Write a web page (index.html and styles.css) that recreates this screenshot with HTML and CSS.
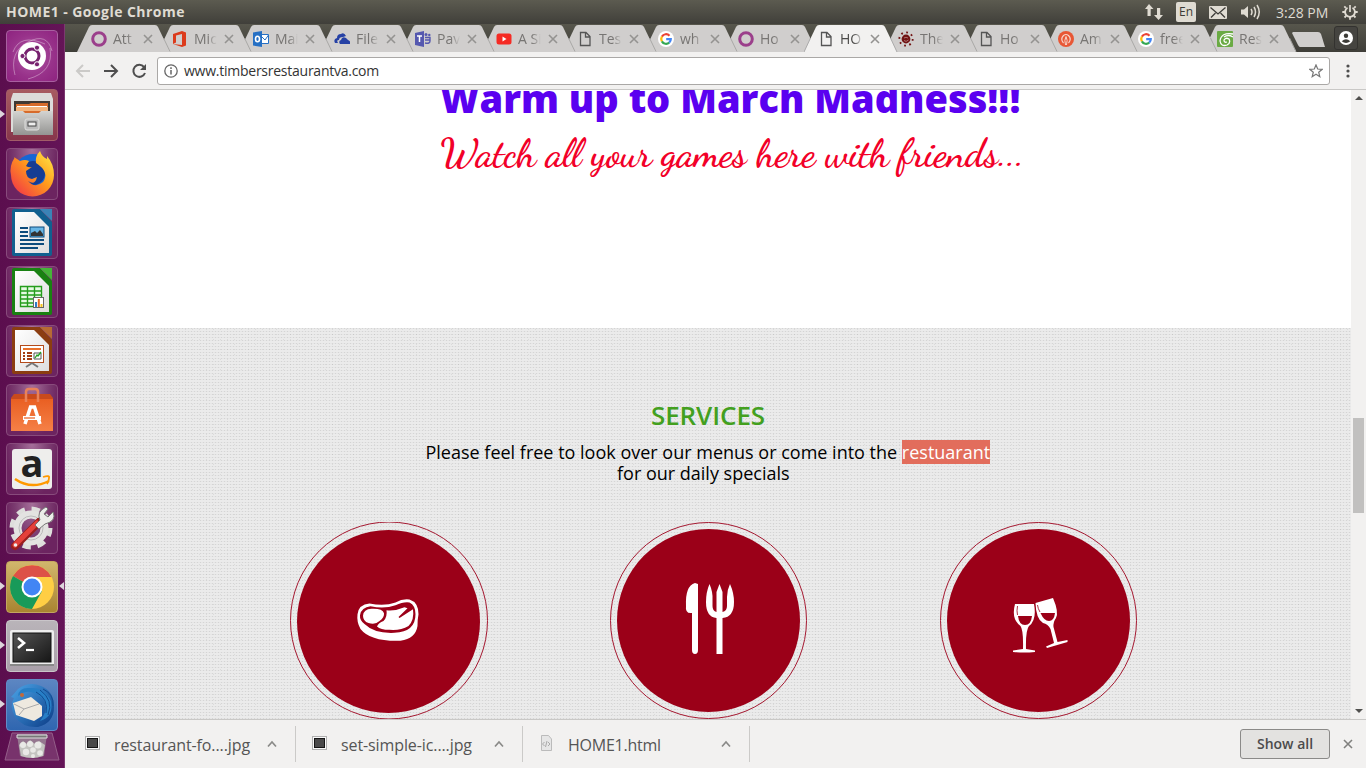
FILE: index.html
```html
<!DOCTYPE html>
<html lang="en">
<head>
<meta charset="utf-8">
<title>HOME1</title>
<link rel="stylesheet" href="styles.css">
</head>
<body>
<svg class="defs" width="0" height="0">
  <defs>
    <linearGradient id="fox" x1="1" y1="0" x2="0" y2="1"><stop offset="0" stop-color="#fff04a"/><stop offset=".45" stop-color="#ff9a1c"/><stop offset="1" stop-color="#f0264d"/></linearGradient>
    <linearGradient id="metal" x1="0" y1="0" x2="0" y2="1"><stop offset="0" stop-color="#d4d4d2"/><stop offset="1" stop-color="#949492"/></linearGradient>
    <linearGradient id="paper" x1="0" y1="0" x2="1" y2="1"><stop offset="0" stop-color="#fff"/><stop offset="1" stop-color="#dedede"/></linearGradient>
    <linearGradient id="screen" x1="0" y1="0" x2="1" y2="1"><stop offset="0" stop-color="#555"/><stop offset="1" stop-color="#161616"/></linearGradient>
    <linearGradient id="bird" x1="0" y1="0" x2="1" y2="1"><stop offset="0" stop-color="#4ba5e8"/><stop offset="1" stop-color="#0b3b86"/></linearGradient>
    <linearGradient id="bag" x1="0" y1="0" x2="0" y2="1"><stop offset="0" stop-color="#e95f22"/><stop offset="1" stop-color="#f58047"/></linearGradient>
  </defs>
  <symbol id="tab" viewBox="0 0 94 28"><path d="M0 28 12 3Q13 1 15 1H78Q80 1 81 3L93 28Z" fill="#d0cecd"/><path d="M86.500 14 93 27.500" stroke="#a9a8a6" fill="none"/></symbol>
  <symbol id="x" viewBox="0 0 10 10"><path d="M1 1 9 9M9 1 1 9" stroke="currentColor" stroke-width="1.600" fill="none"/></symbol>
  <symbol id="ring" viewBox="0 0 16 16"><circle cx="8" cy="8" r="6.300" fill="none" stroke="#9b3f8b" stroke-width="3"/></symbol>
  <symbol id="doc" viewBox="0 0 16 16"><path d="M3.500 1.500H9L13 5.500V14.500H3.500ZM8.500 1.500V6H13" fill="none" stroke="#555" stroke-width="1.300"/></symbol>
  <symbol id="google" viewBox="0 0 16 16"><circle cx="8" cy="8" r="8" fill="#fff"/><g fill="none" stroke-width="2.200"><path d="M3.900 5.600A4.800 4.800 0 0 1 11.500 4.700" stroke="#ea4335"/><path d="M3.900 5.600A4.800 4.800 0 0 0 3.900 10.400" stroke="#fbbc05"/><path d="M3.900 10.400A4.800 4.800 0 0 0 11.200 11.600" stroke="#34a853"/><path d="M11.200 11.600A4.600 4.600 0 0 0 12.800 8.100H8.200" stroke="#4285f4"/></g></symbol>
  <symbol id="up" viewBox="0 0 10 7"><path d="M1 6 5 1.500 9 6" stroke="#8a8a88" stroke-width="1.700" fill="none"/></symbol>
  <symbol id="shot" viewBox="0 0 16 16"><rect x="1.500" y="1.500" width="14" height="13" fill="#fafafa" stroke="#b0b0b0"/><rect x="3.500" y="3.500" width="10" height="9" fill="#4a4a4a" stroke="#151515"/></symbol>
</svg>

<header class="panel">
  <span class="wintitle">HOME1 - Google Chrome</span>
  <div class="tray">
    <svg width="18" height="16" viewBox="0 0 18 16" fill="#dfdbd2"><path d="M4 0 8.500 5H5.700V12H2.500V5H0ZM13.600 16 9 11H12V4H15.200V11H18Z"/></svg>
    <span class="lang">En</span>
    <svg class="mail" width="18" height="13" viewBox="0 0 18 13"><rect width="18" height="13" rx="1" fill="#dfdbd2"/><path d="M1.500 1.500 9 8 16.500 1.500M2 11.500 6.500 7M16 11.500 11.500 7" fill="none" stroke="#3c3b37" stroke-width="1.300"/></svg>
    <svg class="sound" width="20" height="16" viewBox="0 0 20 16"><path d="M0 5.500H3L7 2V14L3 10.500H0Z" fill="#dfdbd2"/><path d="M10 5Q12 8 10 11M13 3Q16 8 13 13M16 1Q20.500 8 16 15" fill="none" stroke="#dfdbd2" stroke-width="1.500"/></svg>
    <span class="clock">3:28 PM</span>
    <svg class="gear" width="16" height="16" viewBox="0 0 16 16" fill="none" stroke="#dfdbd2"><path d="M5.500 3.800A4.900 4.900 0 1 0 10.500 3.800" stroke-width="1.800"/><path d="M8 1V8" stroke-width="1.700"/><path d="M3.800 3.800 2.300 2.300M12.200 3.800 13.700 2.300M3 8H.3M13 8H15.700M4.300 11.700 2.500 13.500M11.700 11.700 13.500 13.500M8 13V15.700" stroke-width="1.800"/></svg>
  </div>
</header>

<div class="desktop">
  <nav class="launcher">
    <div class="tile dash"><svg viewBox="0 0 52 52"><g fill="none" stroke="#fff" opacity=".35"><path d="M9 45Q3 22 22 12T46 21M22 49Q48 42 44 18M7 22Q14 3 39 14"/></g><circle cx="26" cy="26" r="14" fill="#fff"/><g fill="none" stroke="#77216f" stroke-width="3"><circle cx="26" cy="26" r="7"/></g><g fill="#77216f" stroke="#fff" stroke-width="1"><circle cx="16.500" cy="26" r="2.600"/><circle cx="31" cy="17.700" r="2.600"/><circle cx="31" cy="34.300" r="2.600"/></g></svg></div>
    <div class="tile files run"><svg viewBox="0 0 52 52"><path d="M7 4H45L47 10V43H5V10Z" fill="#dcdcda"/><path d="M8 12H44V25H8Z" fill="#403934"/><path d="M10 15H23L25 14H42V24H10Z" fill="#d76b2b"/><path d="M10 18H42V22H10Z" fill="#f4b47d"/><path d="M11 17.500H41" stroke="#fff"/><path d="M7 22H17L19 24H33L35 22H47V46H7Z" fill="url(#metal)"/><rect x="19" y="30" width="14" height="11" rx="2" fill="#bbb" stroke="#e0e0de"/><rect x="22" y="33" width="8" height="4" fill="#eee" stroke="#444"/></svg></div>
    <div class="tile"><svg viewBox="0 0 52 52"><circle cx="27" cy="25" r="19" fill="#1666d4"/><circle cx="27" cy="25" r="12" fill="#153d93"/><path d="M8 9 14 13Q19 11 23 13L20 18Q23 20 26 19L20 23Q20 30 26 31L31 29Q29 38 22 33Q29 41 37 34Q44 24 30 15Q29 8 34 3Q36 9 41 11L41 8Q48 16 48 27A21 21 0 0 1 5 27Q3 18 9 9Z" fill="url(#fox)"/></svg></div>
    <div class="tile"><svg viewBox="0 0 52 52"><path d="M8 2H34L46 15V47Q46 49 44 49H8Q6 49 6 47V4Q6 2 8 2Z" fill="#11608f"/><path d="M9 5H28L43 20V46H9Z" fill="url(#paper)"/><path d="M34 2H46V14Z" fill="#3b83b6"/><path d="M14 21H22M14 25H22M14 29H22M14 33H38M14 37H38M14 41H32" stroke="#0c4b7c" stroke-width="2"/><rect x="24" y="20" width="14" height="10" fill="#67b6e6" stroke="#0c4b7c"/><path d="M25 29V26L29 24 31 26 34 23 37 27V29Z" fill="#333"/></svg></div>
    <div class="tile"><svg viewBox="0 0 52 52"><path d="M8 2H34L46 15V47Q46 49 44 49H8Q6 49 6 47V4Q6 2 8 2Z" fill="#198112"/><path d="M9 5H28L43 20V46H9Z" fill="url(#paper)"/><path d="M34 2H46V14Z" fill="#45b438"/><path d="M14.500 20.500H35.500V40.500H14.500ZM14.500 25H35.500M14.500 29H35.500M14.500 33H35.500M14.500 37H35.500M21.500 20.500V40.500M28.500 20.500V40.500" fill="#e6fae3" stroke="#259d1c" stroke-width="1.400"/><rect x="27.500" y="31.500" width="10" height="10" fill="#fff" stroke="#666"/><path d="M30 41V36" stroke="#2e7ac4" stroke-width="2"/><path d="M32.800 41V33" stroke="#e66a1f" stroke-width="2"/><path d="M35.500 41V38" stroke="#f4c21c" stroke-width="2"/></svg></div>
    <div class="tile"><svg viewBox="0 0 52 52"><path d="M8 2H34L46 15V47Q46 49 44 49H8Q6 49 6 47V4Q6 2 8 2Z" fill="#8b3d11"/><path d="M9 5H28L43 20V46H9Z" fill="url(#paper)"/><path d="M34 2H46V14Z" fill="#b76a34"/><rect x="14.500" y="20.500" width="23" height="17" fill="#fff" stroke="#b44b1b"/><path d="M17 24H35" stroke="#e9712b" stroke-width="2"/><path d="M17 28H19M17 31H19M17 34H19M21 28H26M21 31H26M21 34H26" stroke="#a33e14" stroke-width="2"/><path d="M28 28H35V34H28Z" fill="#fff" stroke="#555"/><path d="M29 33 31 30 32 31 35 27" fill="none" stroke="#20a020" stroke-width="1.300"/><path d="M26 38 20 42M26 38 32 42" stroke="#777" stroke-width="2"/></svg></div>
    <div class="tile"><svg viewBox="0 0 52 52"><path d="M5 14 8 10H44L47 14V20H5Z" fill="#c94a1c"/><path d="M5 15H47V47H5Z" fill="url(#bag)"/><path d="M20 18V8Q20 5 23 5H29Q32 5 32 8V18" fill="none" stroke="#e98259" stroke-width="2.500"/><path d="M19 40 24.500 23H28.500L34 40" fill="none" stroke="#fff" stroke-width="3.500"/><path d="M17 34H35" stroke="#fff" stroke-width="4"/><path d="M18 34H29" stroke="#e95f22" stroke-width="1.200"/></svg></div>
    <div class="tile"><svg viewBox="0 0 52 52"><rect x="6" y="6" width="40" height="40" rx="3" fill="#eeeeec"/><text x="26" y="34" text-anchor="middle" class="amazon">a</text><path d="M9 36Q25 47 43 38" stroke="#ff9900" stroke-width="2.500" fill="none"/><path d="M37 34Q44 32 43 35 43 38 41 41" stroke="#ff9900" stroke-width="1.800" fill="none"/></svg></div>
    <div class="tile"><svg viewBox="0 0 52 52"><circle cx="25" cy="26" r="18.500" fill="none" stroke="#dededc" stroke-width="6" stroke-dasharray="8 6.530"/><circle cx="25" cy="26" r="13.500" fill="none" stroke="#e3e3e1" stroke-width="8"/><circle cx="25" cy="26" r="12" fill="none" stroke="#bbb"/><path d="M9 44 33 20" stroke="#9b1e1e" stroke-width="8" stroke-linecap="round"/><path d="M9 43 31 21" stroke="#e4403b" stroke-width="5" stroke-linecap="round"/><path d="M29 23 34 18Q30 10 40 5L42 7 38 12 42 15 47 10Q51 19 39 22L33 27Z" fill="#ecece9" stroke="#777"/><circle cx="9.500" cy="43" r="1.800" fill="#eee"/></svg></div>
    <div class="tile chrome run focus"><svg viewBox="0 0 52 52"><circle cx="26" cy="26" r="22" fill="#ffce44"/><path d="M26 26 7 15A22 22 0 0 1 45.500 16H26Z" fill="#dd5147"/><path d="M26 26 7 15A22 22 0 0 0 26 48L36 30Z" fill="#189a59"/><circle cx="26" cy="26" r="10.500" fill="#fff"/><circle cx="26" cy="26" r="8.500" fill="#4285f4"/></svg></div>
    <div class="tile term run"><svg viewBox="0 0 52 52"><rect x="4" y="10" width="44" height="36" rx="2" fill="#eee"/><path d="M4 44H48V46H4Z" fill="#888"/><rect x="7" y="13" width="38" height="29" fill="url(#screen)" stroke="#111"/><path d="M12 18 18 23 12 28" fill="none" stroke="#fff" stroke-width="2.600"/><path d="M20 30H28" stroke="#fff" stroke-width="2.200"/></svg></div>
    <div class="tile mailapp run"><svg viewBox="0 0 52 52"><path d="M12 10Q23 2 35 7 48 12 48 28 48 44 32 48 17 49 9 38 3 27 8 19L5 18Q8 15 12 10Z" fill="url(#bird)"/><path d="M7 24 25 18 36 27 36 37 28 42 10 36Z" fill="#eee9df"/><path d="M8 25 18 30 33 25M18 30 13 36" fill="none" stroke="#aaa"/><path d="M12 17Q24 7 37 20 44 29 34 42 48 38 45 22 38 8 24 9 13 8 12 17Z" fill="#277fc6"/><path d="M30 13Q43 20 40 34M34 11Q48 21 42 36M37 10Q48 15 47 27" fill="none" stroke="#134b91"/><circle cx="16" cy="16" r="2" fill="#c46938"/></svg></div>
    <div class="trash"><svg viewBox="0 0 56 30"><path d="M8 1H48L55 28H1Z" fill="#78336c" stroke="#945e89"/><path d="M13 2H43L40 24Q27 27 16 24Z" fill="#95778f"/><path d="M13 3H43V6H13Z" fill="#777" stroke="#ddd"/><path d="M15 13 19 9 23 12 26 8 31 12 35 9 41 13 39 24Q28 28 17 24Z" fill="#c4c4c0"/><g fill="#e9e9e6"><circle cx="19" cy="13" r="3"/><circle cx="26" cy="12" r="3"/><circle cx="34" cy="13" r="3.500"/><circle cx="22" cy="20" r="3.200"/><circle cx="29" cy="18" r="2.800"/><circle cx="36" cy="21" r="2.800"/><circle cx="29" cy="24" r="2"/></g></svg></div>
  </nav>

  <main class="browser">
    <div class="tabs">
      <div class="tab w81" style="--z:15"><svg class="shape"><use href="#tab"/></svg><svg class="fav"><use href="#ring"/></svg><span class="name">Att</span><svg class="close"><use href="#x"/></svg></div>
      <div class="tab w81" style="--z:14"><svg class="shape"><use href="#tab"/></svg><svg class="fav" viewBox="0 0 16 16"><path d="M1 3 10 0 14 1.500V14.500L10 16 1 13 10 14V3L4 4.500V11.500L1 13Z" fill="#dc3b1c"/></svg><span class="name">Mic</span><svg class="close"><use href="#x"/></svg></div>
      <div class="tab w81" style="--z:13"><svg class="shape"><use href="#tab"/></svg><svg class="fav" viewBox="0 0 16 16"><path d="M0 1.500 9 0V16L0 14.500Z" fill="#2670c4"/><path d="M9 3.500H15.500V12.500H9" fill="#fff" stroke="#2670c4"/><path d="M9 6 12 9 15.500 4" fill="none" stroke="#2670c4"/><ellipse cx="4.500" cy="8" rx="2" ry="2.700" fill="none" stroke="#fff" stroke-width="1.600"/></svg><span class="name">Mai</span><svg class="close"><use href="#x"/></svg></div>
      <div class="tab w81" style="--z:12"><svg class="shape"><use href="#tab"/></svg><svg class="fav" viewBox="0 0 16 16"><path d="M1 12Q-1 8 3 7 3 3 7 3 10 1 12 5L9 6Q5 6 5 9 2 9 4 12Z" fill="#2742a5"/><path d="M6 13Q4 10 7 9 8 5 12 7L14 9Q17 10 16 13Z" fill="#2742a5"/></svg><span class="name">File</span><svg class="close"><use href="#x"/></svg></div>
      <div class="tab w81" style="--z:11"><svg class="shape"><use href="#tab"/></svg><svg class="fav" viewBox="0 0 16 16"><path d="M0 2 9 0V16L0 14Z" fill="#5558af"/><path d="M2 5H7M4.500 5V11" stroke="#fff" stroke-width="1.500"/><path d="M10 6.500H15V10Q15 13 10 12M10 9H15" stroke="#5558af" fill="none" stroke-width="1.400"/><circle cx="11" cy="3.500" r="1.500" fill="#5558af"/><circle cx="14.300" cy="4" r="1.200" fill="#5558af"/></svg><span class="name">Pav</span><svg class="close"><use href="#x"/></svg></div>
      <div class="tab w81" style="--z:10"><svg class="shape"><use href="#tab"/></svg><svg class="fav" viewBox="0 0 16 16"><rect x=".5" y="2.500" width="15" height="11" rx="2.500" fill="#f52b24"/><path d="M6.500 5.500 10.500 8 6.500 10.500Z" fill="#fff"/></svg><span class="name">A Si</span><svg class="close"><use href="#x"/></svg></div>
      <div class="tab w81" style="--z:9"><svg class="shape"><use href="#tab"/></svg><svg class="fav"><use href="#doc"/></svg><span class="name">Tes</span><svg class="close"><use href="#x"/></svg></div>
      <div class="tab" style="--z:8"><svg class="shape"><use href="#tab"/></svg><svg class="fav"><use href="#google"/></svg><span class="name">wh</span><svg class="close"><use href="#x"/></svg></div>
      <div class="tab" style="--z:7"><svg class="shape"><use href="#tab"/></svg><svg class="fav"><use href="#ring"/></svg><span class="name">Ho</span><svg class="close"><use href="#x"/></svg></div>
      <div class="tab active" style="--z:20"><svg class="shape" viewBox="0 0 94 28"><path d="M0 28 12 3Q13 1 15 1H78Q80 1 81 3L93 28Z" fill="#f2f1f0"/><path d="M0 28 6.500 14M86.500 14 93 28" stroke="#aaa"/></svg><svg class="fav"><use href="#doc"/></svg><span class="name">HO</span><svg class="close"><use href="#x"/></svg></div>
      <div class="tab" style="--z:5"><svg class="shape"><use href="#tab"/></svg><svg class="fav" viewBox="0 0 16 16"><circle cx="8" cy="8" r="6.700" fill="none" stroke="#711313" stroke-width="1.800" stroke-dasharray="1.800 3.460"/><circle cx="8" cy="8" r="4.400" fill="#711313"/><path d="M6 7Q8 5.500 10 7M6 9.500Q8 11.500 10.500 9" fill="none" stroke="#c79a9a" stroke-width=".7"/></svg><span class="name">The</span><svg class="close"><use href="#x"/></svg></div>
      <div class="tab" style="--z:4"><svg class="shape"><use href="#tab"/></svg><svg class="fav"><use href="#doc"/></svg><span class="name">Ho</span><svg class="close"><use href="#x"/></svg></div>
      <div class="tab" style="--z:3"><svg class="shape"><use href="#tab"/></svg><svg class="fav" viewBox="0 0 16 16"><circle cx="8" cy="8" r="8" fill="#e85735"/><path d="M5.500 12Q2 8 5.500 4.500 8 2.500 10.500 4.500 14 8 10.500 12" fill="none" stroke="#f8d6cd" stroke-width="1.200"/><path d="M8 5.500Q6 9 7.500 14M8 5.500Q10 9 8.500 14" fill="none" stroke="#f8d6cd"/></svg><span class="name">Am</span><svg class="close"><use href="#x"/></svg></div>
      <div class="tab w79" style="--z:2"><svg class="shape"><use href="#tab"/></svg><svg class="fav"><use href="#google"/></svg><span class="name">free</span><svg class="close"><use href="#x"/></svg></div>
      <div class="tab" style="--z:1"><svg class="shape"><use href="#tab"/></svg><svg class="fav" viewBox="0 0 16 16"><rect width="16" height="16" rx="1" fill="#6aaa43"/><path d="M16 3Q4 1 3 10 4 16 10 14 14 12 12 8 9 6 7 9 7 12 10 11M16 6Q11 3 7 6" fill="none" stroke="#fff" stroke-width="1.300"/></svg><span class="name">Res</span><svg class="close"><use href="#x"/></svg></div>
      <svg class="newtab" width="34" height="16" viewBox="0 0 34 16"><path d="M1 0H26Q28 0 29 2L33 15H8Q7 15 6 13L0 1Z" fill="#d0cecd"/></svg>
      <span class="profile"><svg width="14" height="14" viewBox="0 0 14 14"><circle cx="7" cy="7" r="7" fill="#fff"/><circle cx="7" cy="4.700" r="2.200" fill="#3c3b37"/><path d="M2.700 10.200Q7 6.500 11.300 10.200 7 13.800 2.700 10.200Z" fill="#3c3b37"/></svg></span>
    </div>

    <div class="toolbar">
      <svg class="back" width="16" height="14" viewBox="0 0 16 14"><path d="M15 7H2M8 1 2 7 8 13" fill="none" stroke="#cbcac8" stroke-width="2"/></svg>
      <svg class="fwd" width="16" height="14" viewBox="0 0 16 14"><path d="M1 7H14M8 1 14 7 8 13" fill="none" stroke="#4e4e4e" stroke-width="2"/></svg>
      <svg class="reload" width="16" height="16" viewBox="0 0 16 16"><path d="M13 4A6 6 0 1 0 14 10" fill="none" stroke="#4e4e4e" stroke-width="2"/><path d="M15 1V7H9Z" fill="#4e4e4e"/></svg>
      <div class="address">
        <svg width="14" height="14" viewBox="0 0 14 14"><circle cx="7" cy="7" r="6.200" fill="none" stroke="#666" stroke-width="1.300"/><path d="M7 6V10.500M7 3.300V4.900" stroke="#666" stroke-width="1.500"/></svg>
        <span class="url">www.timbersrestaurantva.com</span>
        <svg class="star" width="14" height="14" viewBox="0 0 14 14"><path d="M7 .9 8.700 5 13.200 5.300 9.700 8.200 10.800 12.700 7 10.300 3.200 12.700 4.300 8.200 .8 5.300 5.300 5Z" fill="none" stroke="#777" stroke-width="1.200"/></svg>
      </div>
      <svg class="dots" width="4" height="14" viewBox="0 0 4 14" fill="#4e4e4e"><circle cx="2" cy="2" r="1.600"/><circle cx="2" cy="7" r="1.600"/><circle cx="2" cy="12" r="1.600"/></svg>
    </div>

    <div class="view">
      <div class="page">
        <section class="promo">
          <h1>Warm up to March Madness!!!</h1>
          <p class="script">Watch all your games here with friends...</p>
        </section>
        <section class="services">
          <h2>SERVICES</h2>
          <p class="intro">Please feel free to look over our menus or come into the <mark>restuarant</mark></p>
          <p class="intro second">for our daily specials</p>
          <div class="circles">
            <svg class="c1" width="198" height="198" viewBox="0 0 198 198"><circle cx="99" cy="98.500" r="98.500" fill="none" stroke="#a51931"/><circle cx="98.500" cy="99.500" r="91.500" fill="#9b0018"/>
              <g transform="translate(.5 3) scale(1 .98)"><path d="M67 91Q68 81 79 80 94 83 105 79 112 75 119 76 128 79 128 91 127 96 127 103 125 116 110 118 80 119 70 106 66 99 67 91Z" fill="#fff"/>
              <path d="M69.500 92Q71 84 80 83 94 86 105 82 113 78 119 79 125 82 125 91 125 109 104 110 84 111 74 101 69 97 69.500 92Z" fill="#9b0018"/>
              <path d="M72.500 92.500Q73 86 81 85.500 92 85 93.500 90 94 94 89 98 85 102 78 100 72.500 98 72.500 92.500Z" fill="#fff"/>
              <path d="M96 87Q105 88 114 84L117 85 108 94 109 95 122.500 86Q124 97 118 103 110 108 99 107 90 107 86.500 103.500 88 100 93 98 97 94 96 87Z" fill="#fff"/></g></svg>
            <svg class="c2" width="198" height="198" viewBox="0 0 198 198"><circle cx="98.500" cy="98.500" r="98" fill="none" stroke="#a51931"/><circle cx="98.500" cy="98.500" r="91.500" fill="#9b0018"/>
              <path d="M88 62V128Q88 132 85 132 82 132 82 128V91Q75 92 76 84 75 64 85 61Z" fill="#fff"/>
              <path d="M99.500 62Q103 70 102.500 78V84Q102.500 89 106.500 90V70L109.500 62 112.500 70V90Q117 89 117 84V75Q117 68 120 62 124 71 124 80 124 95 112.500 96V132H106.500V96Q96 95 96 80 96 70 99.500 62Z" fill="#fff"/></svg>
            <svg class="c3" width="198" height="198" viewBox="0 0 198 198"><circle cx="98.500" cy="98.500" r="98" fill="none" stroke="#a51931"/><circle cx="98.500" cy="98.500" r="91.500" fill="#9b0018"/>
              <path d="M75 82H94Q97 98 89 104 85.500 108 86 127L95 128.500V130Q84 131 73 130V128.500L83 127Q83.500 108 80.500 104 71 97 75 82Z" fill="#fff"/><path d="M95.500 81 113 76Q119 90 116 96 113 100 113.500 105L117.500 120 127.500 118V120L107 126 106 124.500 114 121 110.500 107Q108 102 103 101 96 97 95.500 81Z" fill="#fff"/>
              <path d="M78 94H92Q91 103 85 103 79 103 78 94Z" fill="#9b0018"/><path d="M100.500 91H115Q114 99 109 99 104 99 100.500 91Z" fill="#9b0018"/>
              <path d="M77.500 84Q76.500 89 77.500 93M97.500 83Q98 87 100 90" fill="none" stroke="#9b0018" stroke-width=".8"/></svg>
          </div>
        </section>
      </div>
      <div class="scroll"><i class="arrow top"></i><i class="thumb"></i><i class="arrow bottom"></i></div>
    </div>

    <footer class="downloads">
      <div class="item"><svg class="file"><use href="#shot"/></svg><span class="fname f1">restaurant-fo....jpg</span><svg class="chev"><use href="#up"/></svg></div>
      <div class="item"><svg class="file"><use href="#shot"/></svg><span class="fname f2">set-simple-ic....jpg</span><svg class="chev"><use href="#up"/></svg></div>
      <div class="item"><svg class="file" viewBox="0 0 16 16"><path d="M3.500 .5H10.500L13.500 4V15.500H3.500Z" fill="#e6e6e6" stroke="#bbb"/><path d="M6.500 7 4.500 9 6.500 11M10 7 12 9 10 11M9 6 7.500 12" fill="none" stroke="#aaa"/></svg><span class="fname f3">HOME1.html</span><svg class="chev"><use href="#up"/></svg></div>
      <div class="end"><span class="showall">Show all</span><svg class="closebar"><use href="#x"/></svg></div>
    </footer>
  </main>
</div>
</body>
</html>
```
FILE: styles.css
```css
* { box-sizing: border-box; }
body { margin: 0; width: 1366px; height: 768px; overflow: hidden; font-family: "Open Sans", "Noto Sans", sans-serif; background: #f2f1f0; }
h1, h2, p { margin: 0; }
svg { display: block; flex: none; }
.defs { position: absolute; }

.panel { height: 24px; display: flex; justify-content: space-between; align-items: center; padding: 0 8px 0 6px; background: linear-gradient(#5c5b50, #403f3a); color: #dfdbd2; }
.wintitle { font-size: 14px; font-weight: 700; letter-spacing: 0.45px; line-height: 22px; }
.tray { display: flex; align-items: center; }
.lang { width: 20px; height: 20px; margin-left: 13px; border-radius: 2px; background: #dfdbd2; color: #3c3b37; font-size: 12px; line-height: 20px; text-align: center; }
.mail { margin-left: 13px; }
.sound { margin-left: 14px; }
.clock { margin-left: 15px; width: 53px; font-size: 14px; white-space: nowrap; }
.gear { margin-left: 13px; }

.desktop { display: flex; height: 744px; }
.launcher { width: 65px; padding: 6px 0 0 6px; display: flex; flex-direction: column; gap: 7px; background: linear-gradient(90deg, #5b0e4e, #641457); border-right: 1px solid #7c3870; }
.tile { position: relative; flex: none; width: 52px; height: 52px; border: 1px solid #884b7c; border-radius: 4px; background: radial-gradient(ellipse at 50% 0, #a56f9a 0%, #7b3b70 48%, #6c2460 75%); }
.tile svg { width: 52px; height: 52px; margin: -1px; }
.dash { background: radial-gradient(circle, #b25aa8, #98328a 60%, #8e2380); border-color: #a85fa0; }
.files { background: linear-gradient(#a75b61, #87364b); border-color: #a25c68; }
.chrome { background: linear-gradient(#d1b66c, #a98431); border-color: #c4a65f; }
.term { background: linear-gradient(#b9b4b9, #aaa0aa); border-color: #c9c5c9; }
.mailapp { background: linear-gradient(#5c86c2, #2f66b0); border-color: #628cc7; }
.run::before { content: ""; position: absolute; left: -7px; top: 20px; border: 4px solid transparent; border-left: 5px solid #ddd5dc; }
.focus::after { content: ""; position: absolute; right: -7px; top: 20px; border: 4px solid transparent; border-right: 5px solid #ddd5dc; }
.trash { margin: -6px 0 0 -2px; width: 56px; }
.trash svg { width: 56px; height: 30px; }
.amazon { font: 700 38px "Open Sans", sans-serif; fill: #222; }

.browser { width: 1301px; display: flex; flex-direction: column; }
.tabs { display: flex; height: 28px; padding-left: 12px; background: linear-gradient(#57564c, #3f3e39); }
.tab { position: relative; z-index: var(--z); flex: none; width: 80px; height: 28px; display: flex; align-items: center; padding: 2px 0 0 14px; color: #777573; }
.w81 { width: 81px; }
.w79 { width: 79px; }
.shape { position: absolute; left: 0; top: 0; width: 94px; height: 28px; }
.fav, .name, .close { position: relative; }
.fav { width: 16px; height: 16px; }
.name { width: 23px; margin-left: 6px; overflow: hidden; white-space: nowrap; font-size: 14px; line-height: 20px; -webkit-mask: linear-gradient(90deg, #000 60%, transparent); mask: linear-gradient(90deg, #000 60%, transparent); }
.close { width: 10px; height: 10px; margin-left: 7px; color: #949391; }
.active { color: #4b4a48; }
.newtab { margin: 8px 0 0 9px; }
.profile { width: 24px; height: 24px; margin: 2px 0 0 8px; display: grid; place-items: center; border: 1px solid #33322f; border-radius: 3px; background: #454440; }

.toolbar { height: 38px; display: flex; align-items: center; padding: 0 16px 0 10px; background: #f2f1f0; border-bottom: 1px solid #c9c8c6; }
.fwd { margin-left: 12px; }
.reload { margin-left: 12px; }
.address { flex: none; width: 1173px; height: 28px; margin: 0 0 0 10px; padding: 0 6px 0 6px; display: flex; align-items: center; background: #fff; border: 1px solid #aaa8a6; border-radius: 3px; }
.url { margin-left: 6px; font-size: 14px; color: #333; letter-spacing: -0.25px; }
.star { margin-left: auto; }
.dots { margin-left: 16px; }

.view { height: 629px; display: flex; }
.page { width: 1286px; height: 629px; overflow: hidden; background: #fff; }
.promo { height: 238px; padding-left: 375px; overflow: hidden; white-space: nowrap; }
.promo h1 { height: 40px; margin-top: -18px; color: #5a00f0; font-size: 38px; font-weight: 800; line-height: 52px; }
.script { margin-top: 14px; color: #f20028; font: 600 40px/54px "Dancing Script", "Liberation Serif", cursive; letter-spacing: -0.5px; }
.services { height: 391px; padding-top: 70px; color: #000; background-color: #ebebeb; background-image: radial-gradient(circle at .5px .5px, rgba(110,110,110,.15) .5px, transparent 1px), radial-gradient(circle at 1.5px 1.5px, rgba(110,110,110,.12) .5px, transparent 1px), repeating-linear-gradient(0deg, rgba(120,120,120,.04) 0 1px, transparent 1px 3px); background-size: 3px 3px, 7px 5px, auto; }
.services h2 { padding-left: 586px; font-size: 26px; font-weight: 600; line-height: 34px; letter-spacing: -0.1px; color: #43a01f; }
.intro { height: 21px; margin-top: 8px; padding-left: 360.5px; font-size: 18px; line-height: 24px; white-space: nowrap; }
.second { margin-top: 0; padding-left: 552px; }
.intro mark { display: inline-block; height: 24px; background: #e26d5c; color: #fff; }
.circles { display: flex; margin-top: 40px; padding-left: 225px; }
.c2 { margin-left: 122px; }
.c3 { margin-left: 132px; }
.scroll { width: 15px; display: flex; flex-direction: column; align-items: center; background: #f2f1f0; }
.arrow { border: 4px solid transparent; }
.top { margin-top: 2px; border-bottom-color: #50504e; }
.bottom { margin-top: auto; margin-bottom: 2px; border-top-color: #50504e; }
.thumb { width: 11px; height: 95px; margin-top: 318px; background: #c1c0bf; }

.downloads { height: 49px; display: flex; align-items: center; background: #f2f1f0; border-top: 1px solid #c9c8c6; }
.item { width: 227px; height: 36px; display: flex; align-items: center; padding: 2px 18px 0 15px; border-right: 1px solid #cbcac8; color: #555; }
.item:first-child { width: 231px; padding-left: 19px; }
.file { width: 16px; height: 16px; margin-top: -4px; }
.fname { margin-left: 14px; font-size: 16px; letter-spacing: -0.1px; white-space: nowrap; }
.f3 { letter-spacing: -0.25px; }
.chev { width: 10px; height: 8px; margin-left: auto; margin-top: -3px; }
.end { margin-left: auto; padding-right: 13px; display: flex; align-items: center; }
.showall { width: 90px; height: 30px; border: 1px solid #8b8a88; border-radius: 3px; background: #e3e2e0; color: #4c4c4c; font-size: 14px; font-weight: 600; line-height: 27px; text-align: center; }
.closebar { width: 10px; height: 10px; margin-left: 13px; color: #80807e; }
```
